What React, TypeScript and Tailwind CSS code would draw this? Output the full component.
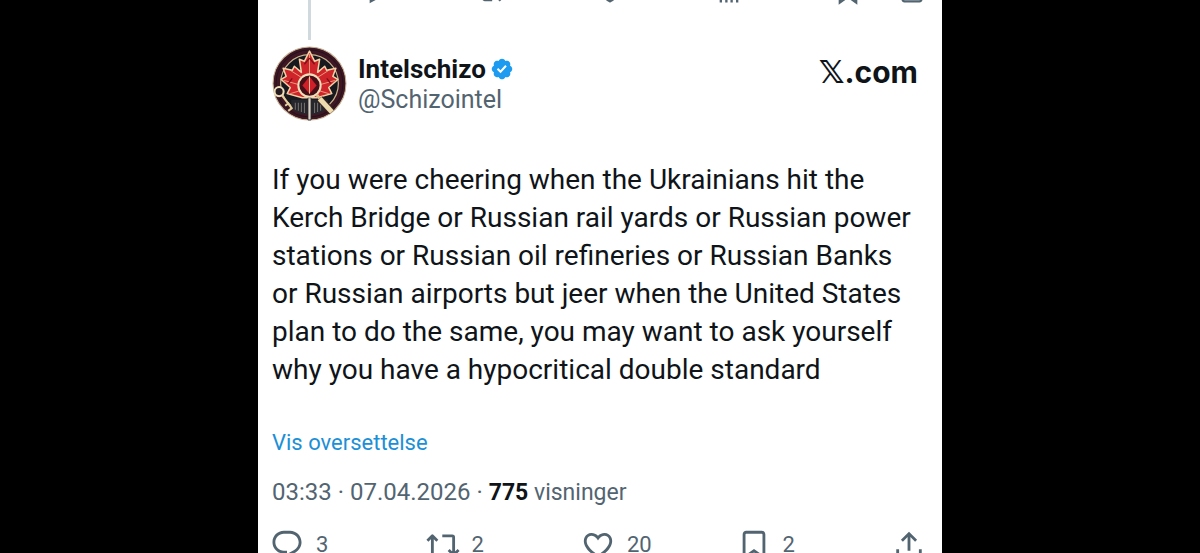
import type { ReactNode } from "react";

const REPLY =
  "M1.751 10c0-4.42 3.584-8 8.005-8h4.366c4.49 0 8.129 3.64 8.129 8.13 0 2.96-1.607 5.68-4.196 7.11l-8.054 4.46v-3.69h-.067c-4.49.1-8.183-3.51-8.183-8.01zm8.005-6c-3.317 0-6.005 2.69-6.005 6 0 3.37 2.77 6.08 6.138 6.01l.351-.01h1.761v2.3l5.087-2.81c1.951-1.08 3.163-3.13 3.163-5.36 0-3.39-2.744-6.13-6.129-6.13H9.756z";
const REPOST =
  "M4.5 3.88l4.432 4.14-1.364 1.46L5.5 7.55V16c0 1.1.896 2 2 2H13v2H7.5c-2.209 0-4-1.79-4-4V7.55L1.432 9.48.068 8.02 4.5 3.88zM16.5 6H11V4h5.5c2.209 0 4 1.79 4 4v8.45l2.068-1.93 1.364 1.46-4.432 4.14-4.432-4.14 1.364-1.46 2.068 1.93V8c0-1.1-.896-2-2-2z";
const LIKE =
  "M16.697 5.5c-1.222-.06-2.679.51-3.89 2.16l-.805 1.09-.806-1.09C9.984 6.01 8.526 5.44 7.304 5.5c-1.243.07-2.349.78-2.91 1.91-.552 1.12-.633 2.78.479 4.82 1.074 1.97 3.257 4.27 7.129 6.61 3.87-2.34 6.052-4.64 7.126-6.61 1.111-2.04 1.03-3.7.477-4.82-.561-1.13-1.666-1.84-2.908-1.91zm4.187 7.69c-1.351 2.48-4.001 5.12-8.379 7.67l-.503.3-.504-.3c-4.379-2.55-7.029-5.19-8.382-7.67-1.36-2.5-1.41-4.86-.514-6.67.887-1.79 2.647-2.91 4.601-3.01 1.651-.09 3.368.56 4.798 2.01 1.429-1.45 3.146-2.1 4.796-2.01 1.954.1 3.714 1.22 4.601 3.01.896 1.81.846 4.17-.514 6.67z";
const VIEWS = "M8.75 21V3h2v18h-2zM18 21V8.5h2V21h-2zM4 21l.004-10h2L6 21H4zm9.248 0v-7h2v7h-2z";
const BOOKMARK =
  "M4 4.5C4 3.12 5.119 2 6.5 2h11C18.881 2 20 3.12 20 4.5v18.44l-8-5.71-8 5.71V4.5zM6.5 4c-.276 0-.5.22-.5.5v14.56l6-4.29 6 4.29V4.5c0-.28-.224-.5-.5-.5h-11z";
const SHARE =
  "M12 2.59l5.7 5.7-1.41 1.42L13 6.41V16h-2V6.41l-3.3 3.3-1.41-1.42L12 2.59zM21 15l-.02 3.51c0 1.38-1.12 2.49-2.5 2.49H5.5C4.11 21 3 19.88 3 18.5V15h2v3.5c0 .28.22.5.5.5h12.98c.28 0 .5-.22.5-.5L19 15h2z";
const VERIFIED =
  "M20.396 11c-.018-.646-.215-1.275-.57-1.816-.354-.54-.852-.972-1.438-1.246.223-.607.27-1.264.14-1.897-.131-.634-.437-1.218-.882-1.687-.47-.445-1.053-.75-1.687-.882-.633-.13-1.29-.083-1.897.14-.273-.587-.704-1.086-1.245-1.44S11.647 1.62 11 1.604c-.646.017-1.273.213-1.813.568s-.969.854-1.24 1.44c-.608-.223-1.267-.272-1.902-.14-.635.13-1.22.436-1.69.882-.445.47-.749 1.055-.878 1.688-.13.633-.08 1.29.144 1.896-.587.274-1.087.705-1.443 1.245-.356.54-.555 1.17-.574 1.817.02.647.218 1.276.574 1.817.356.54.856.972 1.443 1.245-.224.606-.274 1.263-.144 1.896.13.634.433 1.218.877 1.688.47.443 1.054.747 1.687.878.633.132 1.29.084 1.897-.136.274.586.705 1.084 1.246 1.439.54.354 1.17.551 1.816.569.647-.016 1.276-.213 1.817-.567s.972-.854 1.245-1.44c.604.239 1.266.296 1.903.164.636-.132 1.22-.447 1.68-.907.46-.46.776-1.044.908-1.681s.075-1.299-.165-1.903c.586-.274 1.084-.705 1.439-1.246.354-.54.551-1.17.569-1.816zM9.662 14.85l-3.429-3.428 1.293-1.302 2.072 2.072 4.4-4.794 1.347 1.246z";

function Icon({ d, className }: { d: string; className: string }) {
  return (
    <svg viewBox="0 0 24 24" fill="currentColor" aria-hidden="true" className={className}>
      <path d={d} />
    </svg>
  );
}

function RepostIcon() {
  return (
    <svg
      viewBox="0 0 24 24"
      fill="none"
      stroke="currentColor"
      strokeWidth="2"
      strokeLinejoin="round"
      aria-hidden="true"
      className="size-[34px]"
    >
      <path d="M12.500 19h-7a1 1 0 0 1-1-1V5.500M1 9l3.500-3.500L8 9M11.500 5.500h7a1 1 0 0 1 1 1V19M16 15.500l3.500 3.500 3.500-3.500" />
    </svg>
  );
}

function Avatar() {
  return (
    <svg viewBox="0 0 74 74" className="size-[75px] shrink-0" role="img" aria-label="Intelschizo">
      <circle cx="37" cy="37" r="36" fill="#3f1724" stroke="#c4b193" />
      <circle cx="37" cy="37" r="33" fill="none" stroke="#24131b" />
      <circle cx="37" cy="37" r="28.5" fill="#17191f" stroke="#c9b48c" strokeWidth="1.2" />
      <path d="M19 53h36v9a31 31 0 0 1-36 0z" fill="#26262d" />
      <path d="M23 56v7M26 56v8M29 56v9M32 56v10M42 56v10M45 56v9M48 56v8" stroke="#77716b" />
      <path
        d="M37 5l5 10 5-2-2 13 7-6 2 4 9-2-3 8 5 3-9 8 3 6-15 4H30l-15-4 3-6-9-8 5-3-3-8 9 2 2-4 7 6-2-13 5 2z"
        fill="#d0242b"
        stroke="#efd3a6"
        strokeWidth="1.5"
        strokeLinejoin="round"
      />
      <path
        d="M37 8v20M29 31L18 24M45 31l11-7M26 38l-14-4M48 38l14-4M28 44l-10 3M46 44l10 3"
        stroke="#f0b58e"
        strokeWidth=".8"
      />
      <path d="M32 18l5-6M42 18l-5-6M20 32l-4 5M54 32l4 5" stroke="#7a1018" strokeWidth="1.2" />
      <path d="M35.500 51h3v22h-3z" fill="#d9d2c6" stroke="#2a2226" strokeWidth=".8" />
      <circle cx="37" cy="39" r="11" fill="#471018" stroke="#f0dfba" strokeWidth="2" />
      <path d="M37 30l7 9-7 8-7-8z" fill="#cf1f28" />
      <path d="M37 30v17" stroke="#f0c9a0" />
      <path d="M44 48l4 5" stroke="#d9bf8c" strokeWidth="3" />
      <path d="M47 52l12 13" stroke="#3a2420" strokeWidth="7" />
      <path d="M47 52l12 13" stroke="#efdcae" strokeWidth="5" />
      <circle cx="7" cy="45" r="4.500" fill="#241a20" stroke="#efe0bb" strokeWidth="2" />
      <path d="M10 49l10 13M16 64l4-3M13 59l4-3" stroke="#e3cf9f" strokeWidth="2" fill="none" />
    </svg>
  );
}

function Action({ icon, label, count }: { icon: ReactNode; label: string; count?: number }) {
  return (
    <button type="button" aria-label={label} className="flex items-center gap-3">
      {icon}
      {count && <span className="text-[22px] leading-7">{count}</span>}
    </button>
  );
}

export default function App() {
  return (
    <div className="h-screen overflow-hidden bg-black font-['Roboto','Liberation_Sans',sans-serif] text-[#0f1419]">
      <main className="mx-auto min-h-full w-full max-w-[684px] bg-white px-4">
        {/* tail of the post above, with the thread line */}
        <div className="-ml-0.5 flex h-10 text-[#536471]">
          <div className="flex w-[74px] shrink-0 justify-center">
            <div className="w-[3px] bg-[#cfd9de]" />
          </div>
          <div className="ml-3 flex h-1.5 grow items-end justify-between overflow-hidden">
            <Icon d={REPLY} className="size-7" />
            <Icon d={REPOST} className="size-7" />
            <Icon d={LIKE} className="size-7" />
            <Icon d={VIEWS} className="size-7" />
            <div className="flex gap-9">
              <Icon d={BOOKMARK} className="size-7" />
              <Icon d={SHARE} className="size-7" />
            </div>
          </div>
        </div>

        <article className="-ml-0.5 pr-0.5">
          <header className="mt-1.5 flex items-start">
            <Avatar />
            <div className="mt-[7px] ml-[11px]">
              <div className="flex items-center gap-1">
                <h1 className="text-[26px] leading-8 font-bold">Intelschizo</h1>
                <svg viewBox="0 0 22 22" className="size-6 text-[#1d9bf0]" role="img" aria-label="Verified">
                  <path fill="currentColor" d={VERIFIED} />
                </svg>
              </div>
              <p className="text-[25px] leading-[30px] text-[#536471]">@Schizointel</p>
            </div>
            <a href="#" className="mt-2 mr-1.5 ml-auto font-['Inter',sans-serif] text-[30px] leading-9 font-bold">
              <span className="font-['DejaVu_Sans',sans-serif] text-[32px]">𝕏</span>.com
            </a>
          </header>

          <p className="mt-10 text-[28px] leading-[38px]">
            If you were cheering when the Ukrainians hit the Kerch Bridge or Russian rail yards or Russian power
            stations or Russian oil refineries or Russian Banks or Russian airports but jeer when the United States
            plan to do the same, you may want to ask yourself why you have a hypocritical double standard
          </p>

          <a href="#" className="mt-10 block text-[22px] leading-7 text-[#1d8fd6]">
            Vis oversettelse
          </a>

          <p className="mt-5 text-2xl leading-[30px] text-[#536471]">
            03:33 · 07.04.2026 ·{" "}
            <span className="text-[23px]">
              <strong className="text-[#0f1419]">775</strong> visninger
            </span>
          </p>

          <div className="-mx-0.5 mt-5 grid grid-cols-[1fr_1fr_1fr_1fr_auto] text-[#536471]">
            <Action icon={<Icon d={REPLY} className="size-[34px]" />} label="Svar" count={3} />
            <Action icon={<RepostIcon />} label="Repost" count={2} />
            <Action icon={<Icon d={LIKE} className="size-[34px]" />} label="Lik" count={20} />
            <Action icon={<Icon d={BOOKMARK} className="size-[34px]" />} label="Bokmerk" count={2} />
            <Action icon={<Icon d={SHARE} className="size-[34px]" />} label="Del" />
          </div>
        </article>
      </main>
    </div>
  );
}
